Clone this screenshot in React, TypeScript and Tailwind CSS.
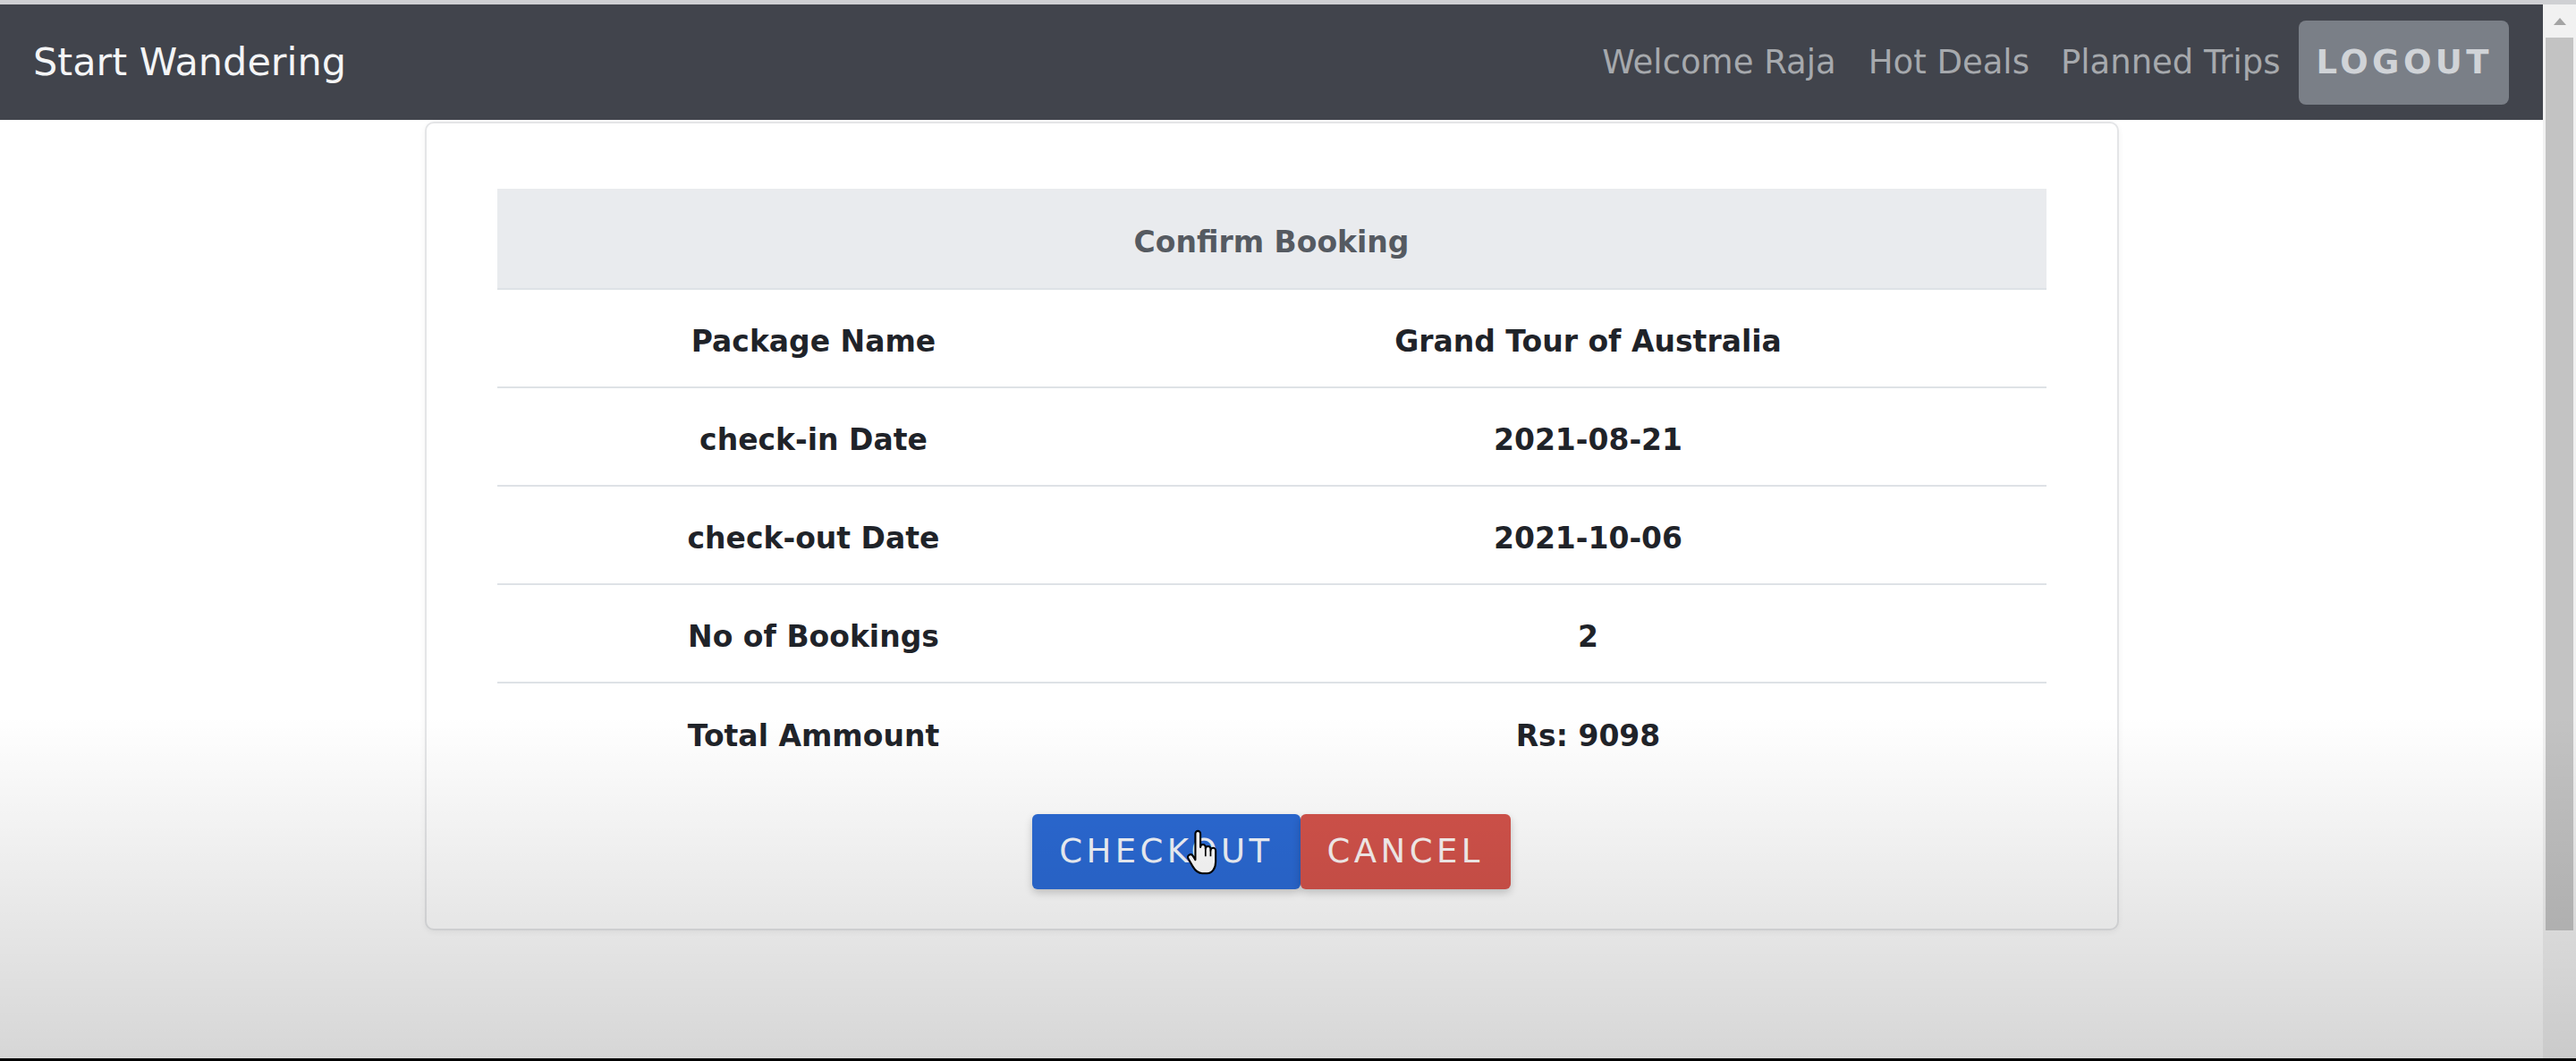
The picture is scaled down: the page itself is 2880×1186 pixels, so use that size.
const rows = [
  { label: 'Package Name', value: 'Grand Tour of Australia' },
  { label: 'check-in Date', value: '2021-08-21' },
  { label: 'check-out Date', value: '2021-10-06' },
  { label: 'No of Bookings', value: '2' },
  { label: 'Total Ammount', value: 'Rs: 9098' },
];

function HandCursor() {
  return (
    <svg viewBox="0 0 20 28" className="h-[53px] w-[38px]">
      <path
        d="M7.5 1C8.3 1 9 1.7 9 2.5L9 10.5C9 9.7 9.7 9 10.5 9C11.3 9 12 9.7 12 10.5L12 11.5C12 10.7 12.7 10 13.5 10C14.3 10 15 10.7 15 11.5L15 12.5C15 11.7 15.7 11 16.5 11C17.3 11 18 11.7 18 12.5L18 19C18 23 16 26 13 26L10 26C7.5 26 6 24.5 4.5 22L1.8 17.3C1.3 16.4 1.6 15.5 2.4 15.1C3.2 14.7 4.1 15 4.6 15.8L6 18L6 2.5C6 1.7 6.7 1 7.5 1Z"
        fill="#ffffff"
        stroke="#000000"
        strokeWidth="1.1"
        strokeLinejoin="round"
      />
      <path d="M12 11.5V16M15 12.5V16" stroke="#000000" strokeWidth="0.9" fill="none" />
    </svg>
  );
}

export default function App() {
  return (
    <div className="relative h-[1186px] w-[2880px] overflow-hidden bg-white font-['DejaVu_Sans',sans-serif]">
      <div className="h-[5px] bg-[#cfd0d3]" />

      <div className="flex h-[1178px]">
        <div className="flex w-[2843px] flex-col">
          {/* Navbar */}
          <nav className="flex h-[129px] items-center justify-between bg-[#41444c] pl-[37px] pr-[38px]">
            <a className="text-[43px] leading-none text-[#f4f5f6]">Start Wandering</a>
            <div className="flex items-center text-[37px] leading-none text-[#a6a9ad]">
              <a>Welcome Raja</a>
              <a className="ml-[36px]">Hot Deals</a>
              <a className="ml-[35px]">Planned Trips</a>
              <button className="ml-[20px] h-[94px] rounded-[8px] bg-[#7a7f87] pl-[20px] pr-[18px] text-[37px] font-bold tracking-[0.12em] text-[#d0d3d7]">
                LOGOUT
              </button>
            </div>
          </nav>

          {/* Booking card */}
          <main className="flex-1 pt-[2px]">
            <div className="mx-auto w-[1894px] rounded-[10px] border-2 border-[#e4e5e7] bg-white px-[79px] pb-[44px] pt-[73px] shadow-[0_2px_6px_rgba(0,0,0,0.06)]">
              <table className="w-full table-fixed border-collapse text-center text-[33px] font-bold">
                <colgroup>
                  <col className="w-[708px]" />
                  <col />
                </colgroup>
                <thead>
                  <tr className="h-[112px] border-b-2 border-[#dee2e6] bg-[#e9ebee] text-[#555a61]">
                    <th colSpan={2} className="pt-[8px]">
                      Confirm Booking
                    </th>
                  </tr>
                </thead>
                <tbody className="text-[#1f2329]">
                  {rows.map((r, i) => (
                    <tr
                      key={r.label}
                      className={i < rows.length - 1 ? 'h-[110px] border-b-2 border-[#dee2e6]' : 'h-[110px]'}
                    >
                      <td className="pt-[8px]">{r.label}</td>
                      <td className="pt-[8px]">{r.value}</td>
                    </tr>
                  ))}
                </tbody>
              </table>

              <div className="relative mt-[37px] flex justify-center">
                <button className="h-[84px] rounded-[6px] bg-[#2b6ad5] pl-[30px] pr-[30px] text-[37px] tracking-[0.12em] text-[#f3f6fc] shadow-[0_4px_10px_rgba(0,0,0,0.2)]">
                  CHECKOUT
                </button>
                <button className="h-[84px] rounded-[6px] bg-[#d4534b] pl-[30px] pr-[30px] text-[37px] tracking-[0.12em] text-[#fbf3f2] shadow-[0_4px_10px_rgba(0,0,0,0.2)]">
                  CANCEL
                </button>
                <div className="pointer-events-none absolute left-[769px] top-[17px]">
                  <HandCursor />
                </div>
              </div>
            </div>
          </main>
        </div>

        {/* Scrollbar */}
        <div className="flex w-[37px] flex-col items-center bg-[#f1f1f1]">
          <div className="flex h-[37px] items-center justify-center">
            <div className="h-0 w-0 border-x-[7px] border-b-[8px] border-x-transparent border-b-[#a3a3a3]" />
          </div>
          <div className="h-[998px] w-[31px] bg-[#c3c3c3]" />
        </div>
      </div>

      <div className="h-[3px] bg-black" />

      {/* video overlay fade */}
      <div className="pointer-events-none absolute inset-x-0 bottom-[3px] top-[800px] bg-linear-to-b from-transparent to-[rgba(0,0,0,0.16)]" />
    </div>
  );
}
